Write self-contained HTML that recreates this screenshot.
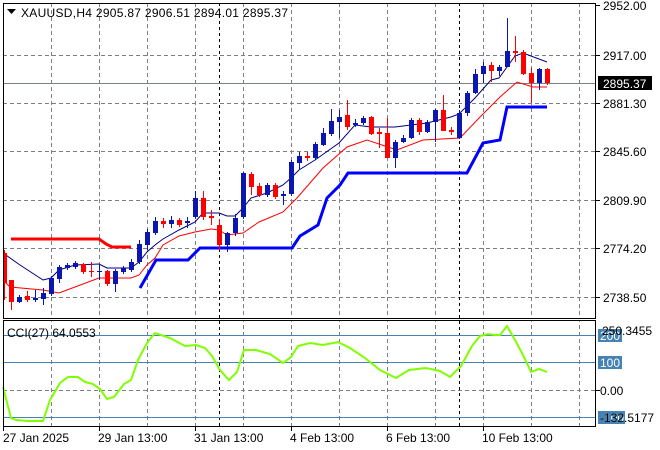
<!DOCTYPE html>
<html><head><meta charset="utf-8"><style>
html,body{margin:0;padding:0;background:#fff;}
svg{display:block;font-family:"Liberation Sans",sans-serif;}
</style></head><body>
<svg width="660" height="450" viewBox="0 0 660 450" xmlns="http://www.w3.org/2000/svg">
<rect width="660" height="450" fill="#fff"/>
<g stroke="#7a8088" stroke-width="1" stroke-dasharray="4,3" fill="none">
<line x1="3" y1="55.5" x2="595" y2="55.5"/>
<line x1="3" y1="103.5" x2="595" y2="103.5"/>
<line x1="3" y1="151.5" x2="595" y2="151.5"/>
<line x1="3" y1="200.5" x2="595" y2="200.5"/>
<line x1="3" y1="248.5" x2="595" y2="248.5"/>
<line x1="3" y1="297.5" x2="595" y2="297.5"/>
<line x1="3" y1="390.5" x2="595" y2="390.5"/>
<line x1="51.5" y1="3" x2="51.5" y2="426"/>
<line x1="99.5" y1="3" x2="99.5" y2="426"/>
<line x1="147.5" y1="3" x2="147.5" y2="426"/>
<line x1="195.5" y1="3" x2="195.5" y2="426"/>
<line x1="243.5" y1="3" x2="243.5" y2="426"/>
<line x1="291.5" y1="3" x2="291.5" y2="426"/>
<line x1="339.5" y1="3" x2="339.5" y2="426"/>
<line x1="387.5" y1="3" x2="387.5" y2="426"/>
<line x1="435.5" y1="3" x2="435.5" y2="426"/>
<line x1="483.5" y1="3" x2="483.5" y2="426"/>
<line x1="531.5" y1="3" x2="531.5" y2="426"/>
<line x1="579.5" y1="3" x2="579.5" y2="426"/>
</g>
<g stroke="#000" stroke-dasharray="3,3">
<line x1="219.5" y1="3" x2="219.5" y2="426"/>
<line x1="459.5" y1="3" x2="459.5" y2="426"/>
</g>
<rect x="3" y="318" width="593" height="3" fill="#fff"/>
<line x1="3" y1="83.5" x2="595" y2="83.5" stroke="#7a8088"/>
<g stroke="#4682b4">
<line x1="3" y1="335.5" x2="595" y2="335.5"/>
<line x1="3" y1="362.5" x2="595" y2="362.5"/>
<line x1="3" y1="417.5" x2="595" y2="417.5"/>
</g>
<polyline fill="none" stroke="#ff0000" stroke-width="3" points="11,239 99,239 106,244 112,247 131,247"/>
<polyline fill="none" stroke="#0000ff" stroke-width="3" points="140,288 156,260 188,260 200,248 292,248 300,236 318,225 327,198 340,185 348,173 467,173 483,143 500,140 507,107 547,107"/>
<polyline fill="none" stroke="#000080" stroke-width="1" points="3,253 20,265 43,280 51,278 59,270 75,265 99,264 107,268 131,268 139,262 147,252 155,245 163,239 179,230 195,222 203,213 219,213 227,216 235,216 243,208 251,198 267,193 283,185 291,178 299,170 315,160 339,143 355,125 371,127 395,127 427,123 451,117 459,114 475,98 491,80 499,78 507,67 515,56 523,53 547,62"/>
<polyline fill="none" stroke="#ff0000" stroke-width="1" points="3,280 10,287 43,290 59,293 75,287 99,278 131,278 139,275 147,265 155,258 163,245 179,236 195,232 211,229 219,230 227,235 243,233 259,222 283,212 297,198 323,168 347,147 367,140 397,150 423,140 460,138 480,117 500,97 517,82 533,87 547,87"/>
<g stroke-width="1">
<path stroke="#ff0000" d="M4.5 250V300M11.5 280V310M27.5 291V302M83.5 263V274M91.5 262V277M107.5 270V286M163.5 218V228M179.5 218V227M203.5 191V220M211.5 210V225M219.5 219V250M251.5 172V195M259.5 183V197M275.5 183V199M307.5 152V161M347.5 100V130M371.5 116V135M379.5 128V148M387.5 118V158M419.5 118V135M443.5 95V131M451.5 127V135M491.5 62V82M515.5 36V62M523.5 50V75M531.5 68V103M547.5 68V85"/>
<path stroke="#0b16b0" d="M19.5 295V303M35.5 290V302M43.5 288V305M51.5 276V296M59.5 265V283M67.5 263V270M75.5 261V269M99.5 265V280M115.5 269V292M123.5 266V274M131.5 259V272M139.5 240V264M147.5 229V250M155.5 217V235M171.5 216V228M187.5 217V228M195.5 191V219M227.5 232V252M235.5 214V236M243.5 172V219M267.5 183V197M283.5 191V205M291.5 160V196M299.5 152V170M315.5 142V160M323.5 128V146M331.5 109V136M339.5 110V138M355.5 119V127M363.5 116V125M395.5 140V168M403.5 135V143M411.5 118V139M427.5 120V133M435.5 109V142M459.5 110V139M467.5 91V116M475.5 69V94M483.5 62V83M499.5 65V76M507.5 18V67M539.5 68V90"/>
</g>
<g fill="#ff0000">
<rect x="3" y="253" width="4" height="30"/><rect x="9" y="280" width="5" height="22"/><rect x="25" y="296" width="5" height="4"/><rect x="81" y="264" width="5" height="8"/><rect x="89" y="271" width="5" height="1"/><rect x="105" y="271" width="5" height="13"/><rect x="161" y="221" width="5" height="3"/><rect x="177" y="220" width="5" height="5"/><rect x="201" y="198" width="5" height="19"/><rect x="209" y="216" width="5" height="2"/><rect x="217" y="225" width="5" height="20"/><rect x="249" y="174" width="5" height="13"/><rect x="257" y="186" width="5" height="9"/><rect x="273" y="185" width="5" height="12"/><rect x="305" y="156" width="5" height="2"/><rect x="345" y="115" width="5" height="12"/><rect x="369" y="117" width="5" height="17"/><rect x="377" y="132" width="5" height="2"/><rect x="385" y="133" width="5" height="25"/><rect x="417" y="120" width="5" height="12"/><rect x="441" y="110" width="5" height="21"/><rect x="449" y="130" width="5" height="2"/><rect x="489" y="65" width="5" height="6"/><rect x="513" y="51" width="5" height="2"/><rect x="521" y="52" width="5" height="22"/><rect x="529" y="73" width="5" height="10"/><rect x="545" y="69" width="5" height="14"/>
</g>
<g fill="#0b16b0">
<rect x="17" y="297" width="5" height="5"/><rect x="33" y="298" width="5" height="2"/><rect x="41" y="293" width="5" height="6"/><rect x="49" y="278" width="5" height="16"/><rect x="57" y="267" width="5" height="12"/><rect x="65" y="265" width="5" height="3"/><rect x="73" y="263" width="5" height="4"/><rect x="97" y="271" width="5" height="1"/><rect x="113" y="271" width="5" height="13"/><rect x="121" y="268" width="5" height="4"/><rect x="129" y="262" width="5" height="8"/><rect x="137" y="244" width="5" height="18"/><rect x="145" y="232" width="5" height="13"/><rect x="153" y="221" width="5" height="12"/><rect x="169" y="220" width="5" height="4"/><rect x="185" y="221" width="5" height="2"/><rect x="193" y="198" width="5" height="19"/><rect x="225" y="233" width="5" height="12"/><rect x="233" y="218" width="5" height="15"/><rect x="241" y="173" width="5" height="44"/><rect x="265" y="185" width="5" height="10"/><rect x="281" y="194" width="5" height="2"/><rect x="289" y="162" width="5" height="32"/><rect x="297" y="156" width="5" height="7"/><rect x="313" y="144" width="5" height="14"/><rect x="321" y="133" width="5" height="12"/><rect x="329" y="121" width="5" height="13"/><rect x="337" y="117" width="5" height="5"/><rect x="353" y="123" width="5" height="2"/><rect x="361" y="118" width="5" height="5"/><rect x="393" y="142" width="5" height="16"/><rect x="401" y="138" width="5" height="4"/><rect x="409" y="120" width="5" height="18"/><rect x="425" y="122" width="5" height="10"/><rect x="433" y="110" width="5" height="12"/><rect x="457" y="113" width="5" height="25"/><rect x="465" y="93" width="5" height="20"/><rect x="473" y="74" width="5" height="19"/><rect x="481" y="66" width="5" height="8"/><rect x="497" y="67" width="5" height="4"/><rect x="505" y="51" width="5" height="16"/><rect x="537" y="69" width="5" height="14"/>
</g>
<polyline fill="none" stroke="#7fff00" stroke-width="2" points="3,387 11,418 16,420 28,421 43,421 50,400 60,383 68,377 78,377 85,382 93,384 100,389 107,399 114,397 124,384 131,380 138,360 147,343 155,333 170,338 185,346 196,345 205,348 212,356 220,370 229,380 237,372 244,350 256,350 270,354 283,363 291,357 298,346 310,343 323,345 338,342 350,348 365,358 380,370 396,378 409,370 426,368 440,371 450,377 461,366 472,346 480,336 488,334 495,335 500,335 507,326 515,340 523,355 531,372 539,369 547,372"/>
<rect x="3.5" y="3.5" width="592" height="315" fill="none" stroke="#000"/>
<rect x="3.5" y="320.5" width="592" height="106" fill="none" stroke="#000"/>
<g stroke="#000">
<line x1="596" y1="5.5" x2="600" y2="5.5"/><line x1="596" y1="55.5" x2="600" y2="55.5"/><line x1="596" y1="103.5" x2="600" y2="103.5"/><line x1="596" y1="151.5" x2="600" y2="151.5"/><line x1="596" y1="200.5" x2="600" y2="200.5"/><line x1="596" y1="248.5" x2="600" y2="248.5"/><line x1="596" y1="297.5" x2="600" y2="297.5"/><line x1="596" y1="390.5" x2="600" y2="390.5"/>
<line x1="3.5" y1="426" x2="3.5" y2="431"/><line x1="99.5" y1="426" x2="99.5" y2="431"/><line x1="195.5" y1="426" x2="195.5" y2="431"/><line x1="291.5" y1="426" x2="291.5" y2="431"/><line x1="387.5" y1="426" x2="387.5" y2="431"/><line x1="483.5" y1="426" x2="483.5" y2="431"/>
</g>
<g font-size="12" fill="#000">
<path d="M7 9h9l-4.5 5z" fill="#000"/>
<text x="21" y="17" textLength="267" lengthAdjust="spacing">XAUUSD,H4  2905.87 2906.51 2894.01 2895.37</text>
<text x="603" y="10">2952.00</text>
<text x="603" y="60">2917.00</text>
<rect x="598" y="76" width="54" height="14" fill="#000"/>
<text x="603" y="88" fill="#fff">2895.37</text>
<text x="603" y="108">2881.30</text>
<text x="603" y="156">2845.60</text>
<text x="603" y="205">2809.90</text>
<text x="603" y="253">2774.20</text>
<text x="603" y="302">2738.50</text>
<text x="7" y="337">CCI(27) 64.0553</text>
<rect x="598" y="329" width="24" height="13" fill="#4682b4"/>
<text x="600" y="340" fill="#fff">200</text>
<text x="602" y="335">250.3455</text>
<rect x="598" y="356" width="24" height="13" fill="#4682b4"/>
<text x="600" y="367" fill="#fff">100</text>
<text x="600" y="395">0.00</text>
<rect x="598" y="411" width="27" height="13" fill="#4682b4"/>
<text x="600" y="422" fill="#fff">-100</text>
<text x="600" y="422">-132.5177</text>
<text x="3" y="442">27 Jan 2025</text>
<text x="98" y="442">29 Jan 13:00</text>
<text x="194" y="442">31 Jan 13:00</text>
<text x="290" y="442">4 Feb 13:00</text>
<text x="386" y="442">6 Feb 13:00</text>
<text x="482" y="442">10 Feb 13:00</text>
</g>
</svg>
</body></html>
